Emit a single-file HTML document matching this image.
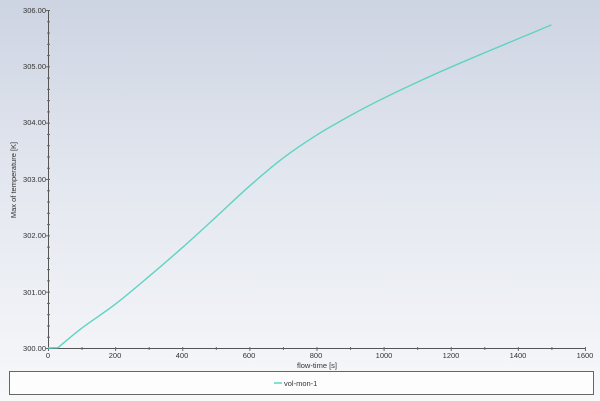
<!DOCTYPE html>
<html><head><meta charset="utf-8"><style>
html,body{margin:0;padding:0;}
body{width:600px;height:401px;background:linear-gradient(#cdd4e2 0%,#e3e7ef 45%,#f7f8fa 100%);font-family:"Liberation Sans",sans-serif;overflow:hidden;}
</style></head><body>
<svg width="600" height="401" xmlns="http://www.w3.org/2000/svg" style="position:absolute;left:0;top:0">
<g stroke="#555" stroke-width="1" fill="none">
<line x1="48.5" y1="10" x2="48.5" y2="348.5"/>
<line x1="48" y1="348.5" x2="585" y2="348.5"/>
</g>
<g id="yt" stroke="#666" stroke-width="1"></g>
<g id="xt" stroke="#666" stroke-width="1"></g>
<g font-size="7.5" fill="#333" text-anchor="end">
<text x="46" y="13">306.00</text>
<text x="46" y="69">305.00</text>
<text x="46" y="125">304.00</text>
<text x="46" y="182">303.00</text>
<text x="46" y="238">302.00</text>
<text x="46" y="295">301.00</text>
<text x="46" y="351">300.00</text>
</g>
<g font-size="7.5" fill="#333" text-anchor="middle">
<text x="48" y="358">0</text>
<text x="115" y="358">200</text>
<text x="182" y="358">400</text>
<text x="249" y="358">600</text>
<text x="316" y="358">800</text>
<text x="384" y="358">1000</text>
<text x="451" y="358">1200</text>
<text x="518" y="358">1400</text>
<text x="585" y="358">1600</text>
<text x="317" y="368">flow-time [s]</text>
<text transform="translate(16,180) rotate(-90)">Max of temperature [K]</text>
</g>
<path id="curve" fill="none" stroke="#5fd3c2" stroke-width="1.4" d=""/>
<rect x="9.5" y="371.5" width="584" height="23" fill="#fdfdfd" stroke="#666" stroke-width="1"/>
<line x1="274" y1="383" x2="282" y2="383" stroke="#5fd3c2" stroke-width="1.5"/>
<text x="284" y="386" font-size="7.5" fill="#333">vol-mon-1</text>
</svg>
<script>
var ns="http://www.w3.org/2000/svg";
var yt=document.getElementById("yt"),xt=document.getElementById("xt");
for(var i=0;i<=30;i++){var y=348.5-i*56.33/5;var l=document.createElementNS(ns,"line");l.setAttribute("x1",i%5==0?46:47);l.setAttribute("x2",50);l.setAttribute("y1",y);l.setAttribute("y2",y);yt.appendChild(l);}
for(var i=0;i<=16;i++){var x=48.5+i*33.56;var l=document.createElementNS(ns,"line");l.setAttribute("x1",x);l.setAttribute("x2",x);l.setAttribute("y1",347);l.setAttribute("y2",i%2==0?351:350);xt.appendChild(l);}
var ys=[328.3,304.3,276.7,247.7,217.2,186.2,158.2,135.2,115.7,98.2,82.2,67.2,52.9,38.9,24.9];
var p=[[58,347.7]];
for(var i=0;i<ys.length;i++)p.push([48+(i+1)*100*0.33563,ys[i]]);
var d="M48,348 L58,347.7";
for(var i=0;i<p.length-1;i++){var p0=p[Math.max(i-1,0)],p1=p[i],p2=p[i+1],p3=p[Math.min(i+2,p.length-1)];
d+=" C"+(p1[0]+(p2[0]-p0[0])/6)+","+(p1[1]+(p2[1]-p0[1])/6)+" "+(p2[0]-(p3[0]-p1[0])/6)+","+(p2[1]-(p3[1]-p1[1])/6)+" "+p2[0]+","+p2[1];}
document.getElementById("curve").setAttribute("d",d);
</script>
</body></html>
